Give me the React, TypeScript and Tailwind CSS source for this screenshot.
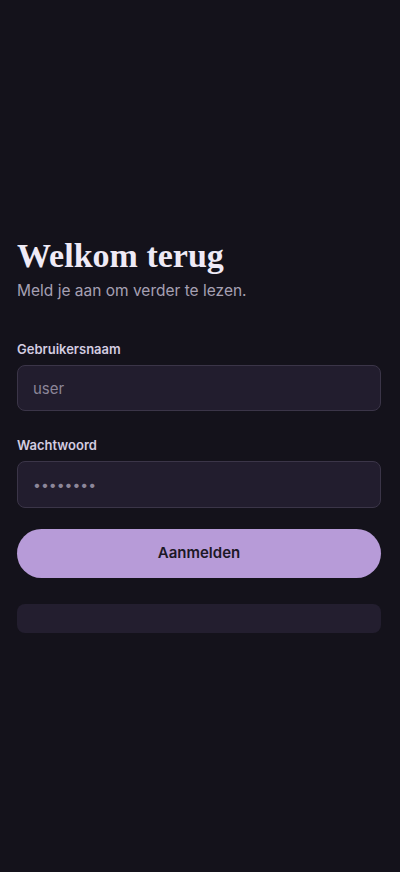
import { useState } from "react";

export default function App() {
  const [username, setUsername] = useState("");
  const [password, setPassword] = useState("password");

  return (
    <div className="flex min-h-screen flex-col justify-center bg-[#14121b] pb-[2px] pl-[17px] pr-[19px] font-['Inter',sans-serif]">
      <h1 className="font-['Liberation_Serif',serif] text-[34px] font-bold leading-[38px] text-[#efeaf6]">
        Welkom terug
      </h1>
      <p className="mt-[4px] text-[15.5px] leading-[24px] text-[#a6a0b3]">
        Meld je aan om verder te lezen.
      </p>

      <form className="mt-[36px] flex flex-col" onSubmit={(e) => e.preventDefault()}>
        <label htmlFor="username" className="text-[13px] font-semibold leading-[20px] text-[#d3cce0]">
          Gebruikersnaam
        </label>
        <input
          id="username"
          value={username}
          onChange={(e) => setUsername(e.target.value)}
          placeholder="user"
          className="mt-[6px] h-[46px] rounded-[8px] border border-[#3b3548] bg-[#221d2e] px-[15px] text-[15px] text-[#e7e2ee] outline-none placeholder:text-[#8c8699]"
        />

        <label htmlFor="password" className="mt-[24px] text-[13px] font-semibold leading-[20px] text-[#d3cce0]">
          Wachtwoord
        </label>
        <input
          id="password"
          type="password"
          value={password}
          onChange={(e) => setPassword(e.target.value)}
          className="mt-[6px] h-[47px] rounded-[8px] border border-[#3b3548] bg-[#221d2e] px-[15px] text-[14px] text-[#8c8699] outline-none"
        />

        <button
          type="submit"
          className="mt-[21px] h-[49px] rounded-full bg-[#b79bd8] text-[15px] font-semibold text-[#1d1826]"
        >
          Aanmelden
        </button>
      </form>

      <div className="mt-[26px] h-[29px] rounded-[8px] bg-[#231e2f]" />
    </div>
  );
}
